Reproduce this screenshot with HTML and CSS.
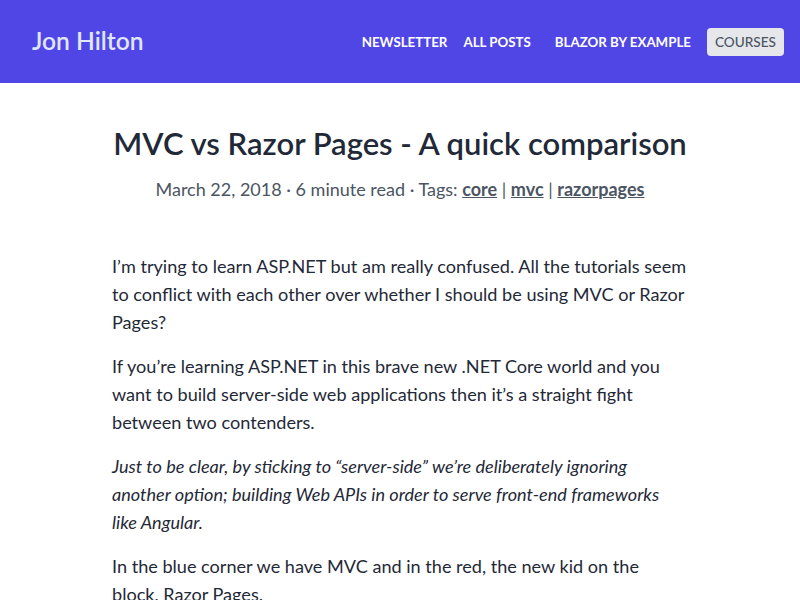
FILE: index.html
```html
<!DOCTYPE html>
<html lang="en">
<head>
<meta charset="utf-8">
<title>MVC vs Razor Pages - A quick comparison</title>
<link rel="stylesheet" href="styles.css">
</head>
<body>
<header class="site-header">
  <a class="logo" href="#">Jon Hilton</a>
  <nav class="nav">
    <a class="nav-link" href="#">NEWSLETTER</a>
    <a class="nav-link" href="#">ALL POSTS</a>
    <a class="nav-link nav-link-wide" href="#">BLAZOR BY EXAMPLE</a>
    <a class="nav-button" href="#">COURSES</a>
  </nav>
</header>
<main class="post">
  <h1 class="post-title">MVC vs Razor Pages - A quick comparison</h1>
  <p class="post-meta">March 22, 2018 · 6 minute read · Tags: <a href="#">core</a> | <a href="#">mvc</a> | <a href="#">razorpages</a></p>
  <article class="post-body">
    <p>I’m trying to learn ASP.NET but am really confused. All the tutorials seem to conflict with each other over whether I should be using MVC or Razor Pages?</p>
    <p>If you’re learning ASP.NET in this brave new .NET Core world and you want to build server-side web applications then it’s a straight fight between two contenders.</p>
    <p><em>Just to be clear, by sticking to “server-side” we’re deliberately ignoring another option; building Web APIs in order to serve front-end frameworks like Angular.</em></p>
    <p>In the blue corner we have MVC and in the red, the new kid on the block, Razor Pages.</p>
  </article>
</main>
</body>
</html>
```
FILE: styles.css
```css
* { box-sizing: border-box; }
html, body { margin: 0; padding: 0; }
body {
  font-family: Lato, "Open Sans", sans-serif;
  color: #1f2937;
  background: #fff;
}
a { color: inherit; }

.site-header {
  height: 83px;
  background: #4f46e5;
  display: flex;
  align-items: center;
  justify-content: space-between;
  padding: 0 16px 0 32px;
}
.logo {
  color: #e0e7ff;
  font-size: 24.6px;
  font-weight: 600;
  text-decoration: none;
  padding-bottom: 2px;
}
.nav {
  display: flex;
  align-items: center;
  gap: 16px;
}
.nav-link {
  color: #fff;
  font-size: 13.3px;
  font-weight: 700;
  text-decoration: none;
}
.nav-link-wide { margin-left: 8px; }
.nav-button {
  background: #e5e7eb;
  color: #4b5563;
  font-size: 13.6px;
  font-weight: 500;
  text-decoration: none;
  padding: 5px 8px;
  border-radius: 4px;
  line-height: 18px;
}

.post {
  max-width: 576px;
  margin: 0 auto;
  padding-top: 40px;
}
.post-title {
  font-size: 31px;
  font-weight: 600;
  text-align: center;
  margin: 0;
  line-height: 40px;
}
.post-meta {
  text-align: center;
  color: #4b5563;
  font-size: 18px;
  margin: 12px 0 0;
  line-height: 28px;
}
.post-meta a { font-weight: 700; }
.post-body { padding-top: 49px; }
.post-body p {
  font-size: 18.1px;
  line-height: 28px;
  margin: 0 0 16px;
}
```
